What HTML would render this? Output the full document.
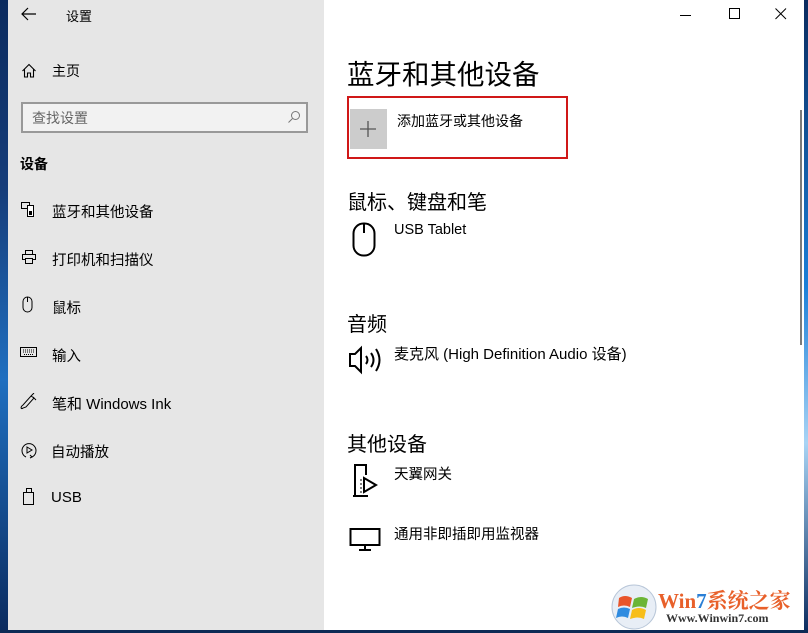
<!DOCTYPE html>
<html><head><meta charset="utf-8"><style>
*{margin:0;padding:0;box-sizing:border-box}
body{width:808px;height:633px;overflow:hidden;background:#0d2a55;position:relative;font-family:"Liberation Sans","Noto Sans CJK SC",sans-serif;color:#000}
.side{position:absolute;left:8px;top:0;width:316px;height:630px;background:#e6e6e6}
.main{position:absolute;left:324px;top:0;width:480px;height:630px;background:#fff;overflow:hidden}
.t{position:absolute;white-space:nowrap}
.ic{position:absolute}
</style></head><body>
<div style="position:absolute;left:0;top:0;width:8px;height:633px;background:linear-gradient(#0b2b5e,#163d7a 30%,#1f6fc0 60%,#0b2b5e)"></div>
<div style="position:absolute;left:804px;top:0;width:4px;height:633px;background:linear-gradient(#0b2b5e,#1b7fd8 45%,#a8d4f5 70%,#0b2b5e)"></div>
<div class="side">
 <svg class="ic" style="left:13px;top:7px" width="16" height="14"><path d="M7 1L1 7L7 13M1 7H15" stroke="#000" fill="none" stroke-width="1.2"/></svg>
 <div class="t" style="left:58px;top:6px;font-size:13px">设置</div>
 <svg class="ic" style="left:13px;top:63px" width="16" height="16"><path d="M1.5 8L8 1.5L14.5 8M3.5 6.5V14H6.5V10H9.5V14H12.5V6.5" stroke="#000" fill="none" stroke-width="1.1"/></svg>
 <div class="t" style="left:44px;top:61px;font-size:14px">主页</div>
 <div style="position:absolute;left:13px;top:102px;width:287px;height:31px;border:2px solid #999;background:#f2f2f2"></div>
 <div class="t" style="left:24px;top:108px;font-size:14px;color:#666">查找设置</div>
 <svg class="ic" style="left:279px;top:110px" width="14" height="14"><circle cx="8.5" cy="5.5" r="4" stroke="#777" fill="none"/><path d="M5.5 8.5L1.5 12.5" stroke="#777"/></svg>
 <div class="t" style="left:12px;top:154px;font-size:14px;font-weight:bold">设备</div>
 <svg class="ic" style="left:13px;top:202px" width="16" height="16"><rect x="0.5" y="0.5" width="8" height="6" fill="none" stroke="#000"/><rect x="6.5" y="3.5" width="6" height="11" fill="#fff" stroke="#000"/><rect x="8" y="9" width="3" height="4" fill="#000"/></svg>
 <div class="t" style="left:44px;top:201px;font-size:14.5px">蓝牙和其他设备</div>
 <svg class="ic" style="left:13px;top:249px" width="16" height="16"><rect x="4.5" y="1.5" width="7" height="4" fill="none" stroke="#000"/><rect x="1.5" y="5.5" width="13" height="5" fill="none" stroke="#000"/><rect x="4.5" y="9.5" width="7" height="5" fill="#e6e6e6" stroke="#000"/></svg>
 <div class="t" style="left:44px;top:249px;font-size:14.5px">打印机和扫描仪</div>
 <svg class="ic" style="left:14px;top:296px" width="12" height="18"><rect x="1" y="1" width="9" height="15" rx="4.5" fill="none" stroke="#000"/><path d="M5.5 1V6" stroke="#000"/></svg>
 <div class="t" style="left:44px;top:297px;font-size:14.5px">鼠标</div>
 <svg class="ic" style="left:12px;top:347px" width="18" height="12"><rect x="0.5" y="0.5" width="16" height="9" fill="none" stroke="#000"/><path d="M3 3h11M3 5h11M4 7.5h9" stroke="#000" stroke-dasharray="1 1"/></svg>
 <div class="t" style="left:44px;top:345px;font-size:14.5px">输入</div>
 <svg class="ic" style="left:12px;top:393px" width="18" height="18"><path d="M3 15C1 17 0 14 3 12L11 3L14 5L6 14Z M11 3L14 0M13 4L16 7" stroke="#000" fill="none" stroke-width="1"/></svg>
 <div class="t" style="left:44px;top:393px;font-size:15px">笔和 Windows Ink</div>
 <svg class="ic" style="left:12px;top:441px" width="18" height="18"><path d="M6 16A7 7 0 1 1 12 16" stroke="#000" fill="none"/><path d="M7 6L12 9L7 12Z" stroke="#000" fill="none"/><path d="M10 14L12 16L10 17" stroke="#000" fill="none"/></svg>
 <div class="t" style="left:43px;top:441px;font-size:14.5px">自动播放</div>
 <svg class="ic" style="left:15px;top:488px" width="12" height="18"><rect x="3.5" y="0.5" width="5" height="4" fill="none" stroke="#000"/><rect x="0.5" y="4.5" width="10" height="12" fill="none" stroke="#000"/></svg>
 <div class="t" style="left:43px;top:489px;font-size:15px">USB</div>
</div>
<div class="main">
 <svg class="ic" style="left:356px;top:9px" width="12" height="12"><path d="M0 6.5H11" stroke="#000"/></svg>
 <svg class="ic" style="left:405px;top:8px" width="12" height="12"><rect x="0.5" y="0.5" width="10" height="10" fill="none" stroke="#000"/></svg>
 <svg class="ic" style="left:451px;top:8px" width="12" height="12"><path d="M0.5 0.5L11 11M11 0.5L0.5 11" stroke="#000"/></svg>
 <div class="t" style="left:23px;top:52px;font-size:27.5px">蓝牙和其他设备</div>
 <div style="position:absolute;left:23px;top:96px;width:221px;height:63px;border:2px solid #d01818"></div>
 <div style="position:absolute;left:26px;top:109px;width:37px;height:40px;background:#ccc"></div>
 <svg class="ic" style="left:35px;top:120px" width="18" height="18"><path d="M9 1V17M1 9H17" stroke="#555" stroke-width="1.3"/></svg>
 <div class="t" style="left:73px;top:111px;font-size:14px">添加蓝牙或其他设备</div>
 <div class="t" style="left:23px;top:186px;font-size:20px">鼠标、键盘和笔</div>
 <svg class="ic" style="left:28px;top:222px" width="26" height="36"><rect x="1.5" y="1.5" width="21" height="32" rx="10" fill="none" stroke="#000" stroke-width="2"/><path d="M12 1.5V11" stroke="#000" stroke-width="2"/></svg>
 <div class="t" style="left:70px;top:222px;font-size:14.5px">USB Tablet</div>
 <div class="t" style="left:23px;top:308px;font-size:20px">音频</div>
 <svg class="ic" style="left:24px;top:344px" width="36" height="32"><path d="M2 10H7L13 4V28L7 22H2Z" fill="none" stroke="#000" stroke-width="2"/><path d="M18 12Q21 16 18 20M23 9Q28 16 23 23M28 5Q35 16 28 27" fill="none" stroke="#000" stroke-width="2"/></svg>
 <div class="t" style="left:70px;top:343px;font-size:15px">麦克风 (High Definition Audio 设备)</div>
 <div class="t" style="left:23px;top:428px;font-size:20px">其他设备</div>
 <svg class="ic" style="left:28px;top:463px" width="30" height="36"><path d="M3 33V2H14V12M3 33H14M1 33H16" fill="none" stroke="#000" stroke-width="2"/><path d="M12 15L24 22L12 29Z" fill="none" stroke="#000" stroke-width="2"/><path d="M9 16V30" stroke="#000" stroke-dasharray="2 2"/></svg>
 <div class="t" style="left:70px;top:463px;font-size:14.5px">天翼网关</div>
 <svg class="ic" style="left:25px;top:527px" width="34" height="26"><rect x="1.5" y="2" width="29" height="16" fill="none" stroke="#000" stroke-width="2"/><path d="M16 18V23M10 23H22" stroke="#000" stroke-width="2"/></svg>
 <div class="t" style="left:70px;top:523px;font-size:14.5px">通用非即插即用监视器</div>
 <div style="position:absolute;left:476px;top:110px;width:2px;height:235px;background:#7a7a7a"></div>
 <svg class="ic" style="left:286px;top:584px" width="48" height="46"><circle cx="24" cy="23" r="22" fill="#e8eef6" stroke="#b8c6d8"/><path d="M9 14Q15 10 22 14L20 23Q14 20 8 23Z" fill="#e8542a"/><path d="M24 15Q31 11 38 15L36 24Q30 21 22 24Z" fill="#6bb536"/><path d="M8 25Q14 22 20 25L18 34Q12 31 6 34Z" fill="#2f8be0"/><path d="M22 26Q29 22 36 26L34 35Q28 32 20 35Z" fill="#f7be1a"/></svg>
 <div class="t" style="left:334px;top:585px;font-size:21px;font-weight:bold;font-family:'Liberation Serif','Noto Serif CJK SC',serif;color:#e8602a">Win<span style="color:#2a7fd6">7</span><span style="color:#e8602a">系统之家</span></div>
 <div class="t" style="left:342px;top:611px;font-size:12px;font-weight:bold;font-family:'Liberation Serif',serif;color:#333">Www.Winwin7.com</div>
</div>
<div style="position:absolute;left:0;top:630px;width:808px;height:3px;background:#0d2a55"></div>
</body></html>
